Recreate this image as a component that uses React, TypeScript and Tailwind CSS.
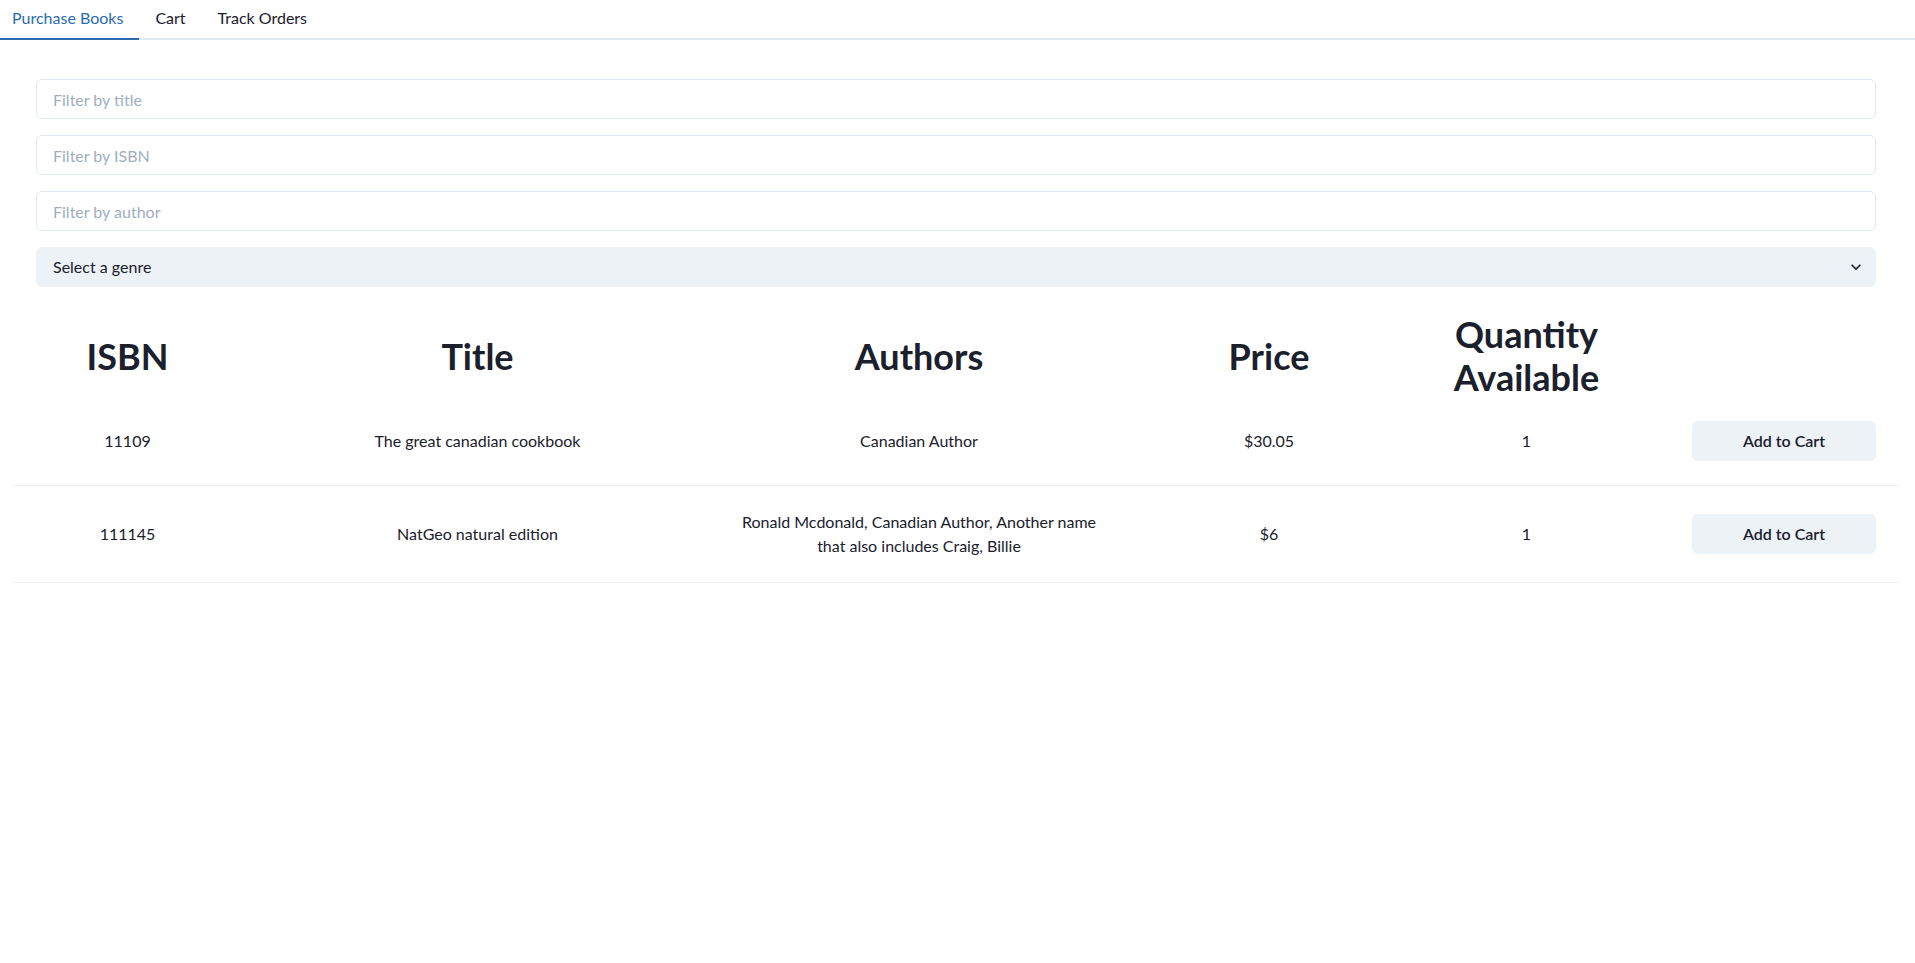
import { useState } from 'react';

const books = [
  { isbn: '11109', title: 'The great canadian cookbook', authors: 'Canadian Author', price: '$30.05', qty: 1 },
  {
    isbn: '111145',
    title: 'NatGeo natural edition',
    authors: 'Ronald Mcdonald, Canadian Author, Another name that also includes Craig, Billie',
    price: '$6',
    qty: 1,
  },
];

const tabs = ['Purchase Books', 'Cart', 'Track Orders'];

export default function App() {
  const [active, setActive] = useState(0);

  return (
    <div className="min-h-screen bg-white font-[Lato,'Noto_Sans',sans-serif] text-[#1a202c]">
      {/* Tabs */}
      <div className="flex border-b-2 border-[#e2e8f0]">
        {tabs.map((t, i) => (
          <button
            key={t}
            onClick={() => setActive(i)}
            className={
              i === active
                ? '-mb-[2px] border-b-2 border-[#2b6cb0] pl-3 pr-4 pt-[6px] pb-[8px] text-base leading-6 text-[#2b6cb0]'
                : '-mb-[2px] border-b-2 border-transparent px-4 pt-[6px] pb-[8px] text-base leading-6'
            }
          >
            {t}
          </button>
        ))}
      </div>

      <div className="pl-3 pr-[15px] pt-[39px]">
        {/* Filters */}
        <div className="flex flex-col gap-4 px-6">
          <input
            placeholder="Filter by title"
            className="h-10 w-full rounded-md border border-[#e2e8f0] px-4 text-base outline-none placeholder:text-[#a0aec0]"
          />
          <input
            placeholder="Filter by ISBN"
            className="h-10 w-full rounded-md border border-[#e2e8f0] px-4 text-base outline-none placeholder:text-[#a0aec0]"
          />
          <input
            placeholder="Filter by author"
            className="h-10 w-full rounded-md border border-[#e2e8f0] px-4 text-base outline-none placeholder:text-[#a0aec0]"
          />
          <div className="relative">
            <select className="h-10 w-full appearance-none rounded-md border border-transparent bg-[#edf2f7] pl-4 pr-8 text-base outline-none">
              <option>Select a genre</option>
              <option>Cooking</option>
              <option>Nature</option>
            </select>
            <svg
              viewBox="0 0 24 24"
              className="pointer-events-none absolute right-[10px] top-[10px] h-5 w-5 fill-[#1a202c]"
            >
              <path d="M16.59 8.59L12 13.17 7.41 8.59 6 10l6 6 6-6z" />
            </svg>
          </div>
        </div>

        {/* Books table */}
        <table className="mt-[14px] w-[1888px] table-fixed border-collapse">
          <colgroup>
            <col className="w-[231px]" />
            <col className="w-[469px]" />
            <col className="w-[414px]" />
            <col className="w-[286px]" />
            <col className="w-[229px]" />
            <col className="w-[259px]" />
          </colgroup>
          <thead>
            <tr>
              {['ISBN', 'Title', 'Authors', 'Price', 'Quantity Available'].map((h) => (
                <th key={h} className="px-6 pt-3 pb-0 align-middle">
                  <h2 className="-mb-[2px] text-4xl leading-[1.2] font-bold">{h}</h2>
                </th>
              ))}
              <th className="px-6" />
            </tr>
          </thead>
          <tbody>
            {books.map((b) => (
              <tr key={b.isbn} className="border-b border-[#edf2f7]">
                <td className="px-6 py-6 text-center text-base leading-6">{b.isbn}</td>
                <td className="px-6 py-6 text-center text-base leading-6">{b.title}</td>
                <td className="px-6 py-6 text-center text-base leading-6">{b.authors}</td>
                <td className="px-6 py-6 text-center text-base leading-6">{b.price}</td>
                <td className="px-6 py-6 text-center text-base leading-6">{b.qty}</td>
                <td className="px-6 py-6">
                  <div className="flex justify-end">
                    <button className="h-10 w-[184px] rounded-md bg-[#edf2f7] text-base font-semibold">
                      Add to Cart
                    </button>
                  </div>
                </td>
              </tr>
            ))}
          </tbody>
        </table>
      </div>
    </div>
  );
}
